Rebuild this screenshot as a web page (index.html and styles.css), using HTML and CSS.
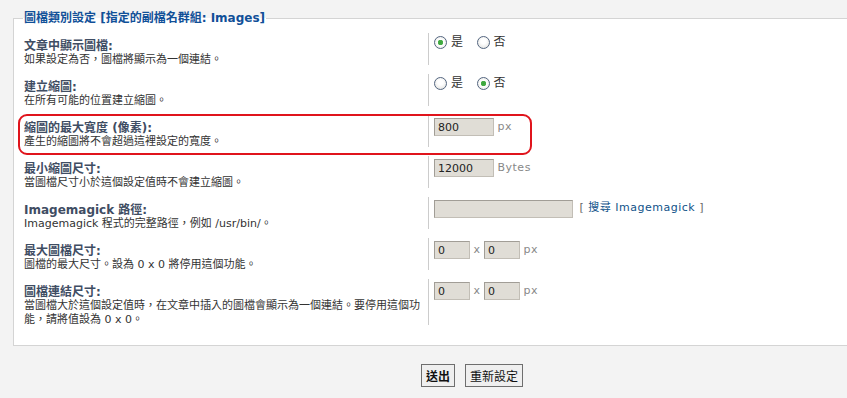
FILE: index.html
```html
<!DOCTYPE html>
<html lang="zh-Hant">
<head>
  <meta charset="UTF-8" />
  <title>圖檔類別設定</title>
  <link rel="stylesheet" href="styles.css">
</head>
<body>
  <div class="page">
    <fieldset class="settings">
      <legend>圖檔類別設定 [指定的副檔名群組: Images]</legend>

      <dl>
        <dt><label>文章中顯示圖檔:</label><span>如果設定為否，圖檔將顯示為一個連結。</span></dt>
        <dd>
          <label class="radio"><input type="radio" name="inline" checked>是</label>
          <label class="radio"><input type="radio" name="inline">否</label>
        </dd>
      </dl>

      <dl>
        <dt><label>建立縮圖:</label><span>在所有可能的位置建立縮圖。</span></dt>
        <dd>
          <label class="radio"><input type="radio" name="thumb">是</label>
          <label class="radio"><input type="radio" name="thumb" checked>否</label>
        </dd>
      </dl>

      <dl class="marked">
        <dt><label>縮圖的最大寬度 (像素):</label><span>產生的縮圖將不會超過這裡設定的寬度。</span></dt>
        <dd><input type="text" class="num" value="800"> <span class="unit">px</span></dd>
      </dl>

      <dl>
        <dt><label>最小縮圖尺寸:</label><span>當圖檔尺寸小於這個設定值時不會建立縮圖。</span></dt>
        <dd><input type="text" class="num" value="12000"> <span class="unit">Bytes</span></dd>
      </dl>

      <dl>
        <dt><label>Imagemagick 路徑:</label><span>Imagemagick 程式的完整路徑，例如 /usr/bin/。</span></dt>
        <dd><input type="text" class="path" value=""> <span class="unit link">[ <a href="#">搜尋 Imagemagick</a> ]</span></dd>
      </dl>

      <dl>
        <dt><label>最大圖檔尺寸:</label><span>圖檔的最大尺寸。設為 0 x 0 將停用這個功能。</span></dt>
        <dd><input type="text" class="small" value="0"> <span class="unit">x</span> <input type="text" class="small" value="0"> <span class="unit">px</span></dd>
      </dl>

      <dl>
        <dt><label>圖檔連結尺寸:</label><span>當圖檔大於這個設定值時，在文章中插入的圖檔會顯示為一個連結。要停用這個功能，請將值設為 0 x 0。</span></dt>
        <dd><input type="text" class="small" value="0"> <span class="unit">x</span> <input type="text" class="small" value="0"> <span class="unit">px</span></dd>
      </dl>
    </fieldset>

    <div class="buttons">
      <button class="submit">送出</button>
      <button>重新設定</button>
    </div>
  </div>
</body>
</html>
```

FILE: styles.css
```css
body {
  margin: 0;
  background-color: #f3f3f3;
  font-family: "DejaVu Sans", "Noto Sans CJK TC", sans-serif;
  font-size: 11px;
  color: #333;
  overflow: hidden;
}
.page {
  width: 918px;
  padding: 11px 0 0 13px;
}
.settings {
  margin: 0;
  padding: 8px 0 20px 10px;
  border: 1px solid #d4d4d4;
  background: #fff;
  position: relative;
}
.settings legend {
  padding: 0 1px;
  margin-left: -1px;
  font-size: 12px;
  line-height: 14px;
  font-weight: bold;
  color: #115098;
}
dl {
  display: flex;
  margin: 0 0 9px 0;
}
dl:last-child {
  margin-bottom: 0;
}
dt {
  width: 398px;
  padding: 6px 6px 0 0;
  margin-bottom: -2px;
  line-height: 14px;
}
dt label {
  display: block;
  font-size: 12px;
  font-weight: bold;
  color: #3f4d63;
}
dt span {
  display: block;
  font-size: 11px;
  color: #333;
}
dd {
  margin: 0;
  border-left: 1px solid #cccccc;
  padding: 2px 0 0 5px;
  min-height: 30px;
  color: #333;
  line-height: 14px;
}
.radio {
  display: inline-flex;
  align-items: center;
  margin-right: 10px;
  font-size: 12px;
}
.radio input {
  appearance: none;
  width: 13px;
  height: 13px;
  margin: 0 4px 0 0;
  border: 1px solid #53657f;
  border-radius: 50%;
  background: radial-gradient(circle at 50% 40%, #fff 30%, #dcdcd8 100%);
}
.radio input:checked {
  background: radial-gradient(circle, #3aa23a 0, #49b049 2.5px, #fff 3px, #e6e6e2 100%);
}
input[type="text"] {
  font-family: "DejaVu Sans", sans-serif;
  font-size: 11px;
  color: #222;
  height: 18px;
  box-sizing: border-box;
  margin: 1px 0 0 0;
  padding: 1px 3px;
  background: #e0ddd6;
  border: 1px solid #c2beb6;
  border-top-color: #a19d96;
  border-left-color: #a19d96;
  vertical-align: top;
}
.num {
  width: 60px;
}
.path {
  width: 139px;
}
.small {
  width: 36px;
}
.unit {
  display: inline-block;
  padding-top: 3px;
  color: #888;
  vertical-align: top;
  letter-spacing: 0.5px;
}
.unit.link {
  padding-top: 2px;
  margin-left: 3px;
  color: #666;
}
.unit a {
  color: #105289;
  text-decoration: none;
}
.marked::before {
  content: "";
  position: absolute;
  left: 4px;
  top: 89px;
  width: 510px;
  height: 37px;
  border: 2px solid #e0141c;
  border-radius: 9px;
  pointer-events: none;
}
.buttons {
  padding-top: 18px;
  display: flex;
  justify-content: center;
  gap: 10px;
}
.buttons button {
  font-family: "Noto Sans CJK TC", sans-serif;
  font-size: 12px;
  height: 23px;
  padding: 0 4px;
  background: #efefef;
  border: 1px solid #6e6e6e;
  color: #111;
}
.buttons .submit {
  font-weight: bold;
}
```
